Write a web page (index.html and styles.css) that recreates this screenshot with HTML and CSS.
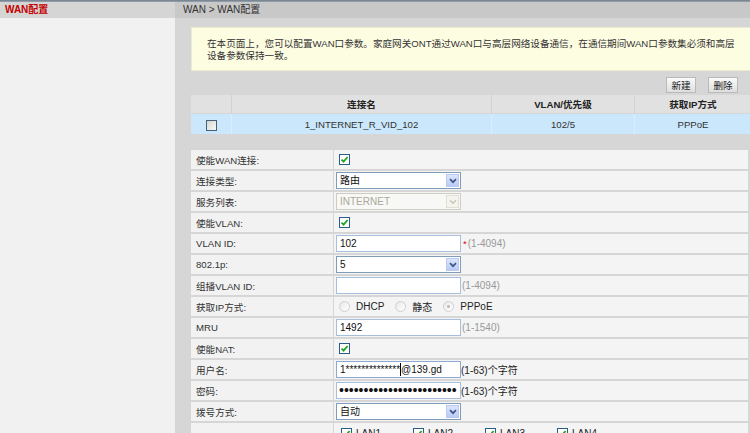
FILE: index.html
```html
<!DOCTYPE html>
<html lang="zh-CN">
<head>
<meta charset="utf-8">
<title>WAN配置</title>
<link rel="stylesheet" href="styles.css">
</head>
<body>
<div class="topline"></div>
<div class="frame">
  <aside class="sidebar">
    <div class="side-head">WAN配置</div>
    <div class="side-body"></div>
  </aside>
  <main class="main">
    <div class="crumb">WAN &gt; WAN配置</div>
    <div class="content">
      <div class="notice">在本页面上，您可以配置WAN口参数。家庭网关ONT通过WAN口与高层网络设备通信，在通信期间WAN口参数集必须和高层<br>设备参数保持一致。</div>
      <div class="toolbar">
        <button class="btn">新建</button>
        <button class="btn">删除</button>
      </div>
      <table class="list">
        <tr class="list-head">
          <th class="c-chk"></th>
          <th class="c-name">连接名</th>
          <th class="c-vlan">VLAN/优先级</th>
          <th class="c-ip">获取IP方式</th>
        </tr>
        <tr class="list-row">
          <td class="c-chk"><span class="cb cb-plain"></span></td>
          <td>1_INTERNET_R_VID_102</td>
          <td>102/5</td>
          <td>PPPoE</td>
        </tr>
      </table>

      <div class="form">
        <div class="lbl">使能WAN连接:</div>
        <div class="val"><span class="cb cb-on"><svg width="9" height="9" viewBox="0 0 9 9"><path d="M1.5 4.6 L3.6 6.7 L7.6 2" stroke="#22a322" stroke-width="1.8" fill="none"/></svg></span></div>

        <div class="lbl">连接类型:</div>
        <div class="val"><div class="select"><span class="sel-text">路由</span><span class="sel-btn"><svg width="8" height="6" viewBox="0 0 8 6"><path d="M1 1.2 L4 4.2 L7 1.2" stroke="#3f5685" stroke-width="1.7" fill="none"/></svg></span></div></div>

        <div class="lbl">服务列表:</div>
        <div class="val"><div class="select select-off"><span class="sel-text">INTERNET</span><span class="sel-btn"><svg width="8" height="6" viewBox="0 0 8 6"><path d="M1 1.2 L4 4.2 L7 1.2" stroke="#c9c7ba" stroke-width="1.5" fill="none"/></svg></span></div></div>

        <div class="lbl">使能VLAN:</div>
        <div class="val"><span class="cb cb-on"><svg width="9" height="9" viewBox="0 0 9 9"><path d="M1.5 4.6 L3.6 6.7 L7.6 2" stroke="#22a322" stroke-width="1.8" fill="none"/></svg></span></div>

        <div class="lbl">VLAN ID:</div>
        <div class="val"><div class="field">102</div><span class="req">*</span><span class="hint">(1-4094)</span></div>

        <div class="lbl">802.1p:</div>
        <div class="val"><div class="select"><span class="sel-text">5</span><span class="sel-btn"><svg width="8" height="6" viewBox="0 0 8 6"><path d="M1 1.2 L4 4.2 L7 1.2" stroke="#3f5685" stroke-width="1.7" fill="none"/></svg></span></div></div>

        <div class="lbl">组播VLAN ID:</div>
        <div class="val"><div class="field"></div><span class="hint">(1-4094)</span></div>

        <div class="lbl">获取IP方式:</div>
        <div class="val radios">
          <span class="radio"></span><span class="rtext">DHCP</span>
          <span class="radio"></span><span class="rtext">静态</span>
          <span class="radio radio-on"></span><span class="rtext">PPPoE</span>
        </div>

        <div class="lbl">MRU</div>
        <div class="val"><div class="field">1492</div><span class="hint">(1-1540)</span></div>

        <div class="lbl">使能NAT:</div>
        <div class="val"><span class="cb cb-on"><svg width="9" height="9" viewBox="0 0 9 9"><path d="M1.5 4.6 L3.6 6.7 L7.6 2" stroke="#22a322" stroke-width="1.8" fill="none"/></svg></span></div>

        <div class="lbl">用户名:</div>
        <div class="val"><div class="field field-focus">1**************<span class="caret"></span>@139.gd</div><span class="note">(1-63)个字符</span></div>

        <div class="lbl">密码:</div>
        <div class="val"><div class="field field-pass">••••••••••••••••••••••••</div><span class="note">(1-63)个字符</span></div>

        <div class="lbl">拨号方式:</div>
        <div class="val"><div class="select"><span class="sel-text">自动</span><span class="sel-btn"><svg width="8" height="6" viewBox="0 0 8 6"><path d="M1 1.2 L4 4.2 L7 1.2" stroke="#3f5685" stroke-width="1.7" fill="none"/></svg></span></div></div>

        <div class="lbl lbl-tall"></div>
        <div class="val lans">
          <span class="lan"><span class="cb cb-on"><svg width="9" height="9" viewBox="0 0 9 9"><path d="M1.5 4.6 L3.6 6.7 L7.6 2" stroke="#22a322" stroke-width="1.8" fill="none"/></svg></span>LAN1</span>
          <span class="lan"><span class="cb cb-on"><svg width="9" height="9" viewBox="0 0 9 9"><path d="M1.5 4.6 L3.6 6.7 L7.6 2" stroke="#22a322" stroke-width="1.8" fill="none"/></svg></span>LAN2</span>
          <span class="lan"><span class="cb cb-on"><svg width="9" height="9" viewBox="0 0 9 9"><path d="M1.5 4.6 L3.6 6.7 L7.6 2" stroke="#22a322" stroke-width="1.8" fill="none"/></svg></span>LAN3</span>
          <span class="lan"><span class="cb cb-on"><svg width="9" height="9" viewBox="0 0 9 9"><path d="M1.5 4.6 L3.6 6.7 L7.6 2" stroke="#22a322" stroke-width="1.8" fill="none"/></svg></span>LAN4</span>
        </div>
      </div>
    </div>
  </main>
</div>
</body>
</html>
```

FILE: styles.css
```css
html, body {
  margin: 0;
  padding: 0;
}
body {
  width: 750px;
  height: 433px;
  overflow: hidden;
  background: #d6d6d6;
  font-family: "Liberation Sans", "Noto Sans CJK SC", sans-serif;
  font-size: 9.6px;
  color: #333;
}
.topline {
  height: 2px;
  background: linear-gradient(#6f7d8b, #9aa6b1);
}
.frame {
  display: flex;
  height: 431px;
}
.sidebar {
  width: 175px;
  flex: none;
  display: flex;
  flex-direction: column;
  background: #f1f1f1;
}
.side-head {
  height: 16px;
  line-height: 16px;
  padding-left: 5px;
  background: #d5d5d5;
  color: #c40000;
  font-weight: bold;
  font-size: 10px;
}
.side-body {
  flex: 1;
}
.main {
  flex: 1;
  display: flex;
  flex-direction: column;
  background: #d6d6d6;
}
.crumb {
  height: 16px;
  line-height: 16px;
  padding-left: 8px;
  background: #c8c8c8;
  color: #333;
  font-size: 10px;
}
.content {
  padding: 9px 2px 0 16px;
}
.notice {
  height: 44px;
  box-sizing: border-box;
  padding: 10px 0 0 15px;
  line-height: 12px;
  background: #fdfde2;
  border: 1px solid #ecebcf;
  white-space: nowrap;
  overflow: hidden;
}
.toolbar {
  display: flex;
  justify-content: flex-end;
  gap: 12px;
  height: 16px;
  margin: 6px 0 2px;
  padding-right: 13px;
}
.btn {
  width: 30px;
  height: 16px;
  padding: 0;
  font: inherit;
  color: #222;
  border: 1px solid #b9b9b9;
  background: linear-gradient(#fafafa, #dedede);
}
.list {
  width: 557px;
  border-collapse: collapse;
  table-layout: fixed;
}
.list th, .list td {
  height: 18px;
  padding: 0;
  text-align: center;
  vertical-align: middle;
}
.list th {
  background: #e1e1e1;
  color: #222;
  font-weight: bold;
  border-left: 1px solid #d2d2d2;
}
.list td {
  background: #cbe7fb;
  border-left: 1px solid #dcecf8;
  border-top: 1px solid #d6d6d6;
}
.list .c-chk { width: 40px; border-left: none; }
.list .c-name { width: 259px; }
.list .c-vlan { width: 142px; }
.list .c-ip { width: 116px; }
.list td.c-chk {
  padding-top: 2px;
}

.cb {
  display: inline-flex;
  align-items: center;
  justify-content: center;
  width: 11px;
  height: 11px;
  box-sizing: border-box;
  border: 1px solid #2a5c8a;
  background: linear-gradient(135deg, #dcdcd6, #ffffff);
  vertical-align: middle;
}
.cb-plain {
  border-color: #46607c;
  background: linear-gradient(135deg, #d6d6d0, #f8f8f8);
}
.cb-on {
  background: #fff;
}

.form {
  margin-top: 16px;
  width: 557px;
  display: grid;
  grid-template-columns: 142px 1fr;
  grid-auto-rows: 19px;
  column-gap: 1px;
  row-gap: 2px;
  background: #d6d6d6;
}
.lbl {
  background: #f2f2f2;
  padding-left: 5px;
  display: flex;
  align-items: center;
  color: #333;
}
.val {
  background: #f4f4f4;
  padding-left: 2px;
  display: flex;
  align-items: center;
}
.val > .cb {
  margin-left: 3px;
}
.select {
  width: 125px;
  height: 17px;
  box-sizing: border-box;
  border: 1px solid #7f9db9;
  background: #fff;
  display: flex;
  align-items: stretch;
}
.sel-text {
  flex: 1;
  padding-left: 3px;
  line-height: 15px;
  color: #111;
  font-size: 10px;
}
.sel-btn {
  width: 13px;
  margin: 1px;
  box-sizing: border-box;
  border: 1px solid #b9c9ef;
  background: linear-gradient(#dbe5fd, #b9cbf6);
  display: flex;
  align-items: center;
  justify-content: center;
}
.select-off {
  border-color: #cfcdc2;
  background: #f8f8f6;
}
.select-off .sel-text {
  color: #aca899;
}
.select-off .sel-btn {
  border-color: #e2e0d6;
  background: #f4f3ee;
}
.field {
  width: 125px;
  height: 17px;
  box-sizing: border-box;
  border: 1px solid #a7bfdc;
  background: #fff;
  padding-left: 3px;
  line-height: 15px;
  color: #111;
  font-size: 10px;
  white-space: nowrap;
  overflow: hidden;
  position: relative;
}
.field-focus {
  border-color: #8eaad2;
}
.caret {
  display: inline-block;
  width: 1px;
  height: 13px;
  background: #000;
  vertical-align: -3px;
}
.field-pass {
  font-size: 14px;
  line-height: 14px;
  padding-left: 2px;
  letter-spacing: 0;
}
.req {
  color: #e00000;
  margin-left: 2px;
}
.hint {
  color: #999;
  margin-left: 1px;
  font-size: 10px;
}
.note {
  color: #222;
  font-size: 10px;
}
.radios {
  padding-left: 5px;
}
.radio {
  width: 9px;
  height: 9px;
  border-radius: 50%;
  border: 1px solid #cfcfcf;
  background: linear-gradient(135deg, #e8e8e8, #ffffff);
  position: relative;
}
.radio-on::after {
  content: "";
  position: absolute;
  left: 3px;
  top: 3px;
  width: 3px;
  height: 3px;
  border-radius: 50%;
  background: #b8b8b8;
}
.rtext {
  margin-left: 6px;
  margin-right: 11px;
  color: #222;
  font-size: 10px;
}
.lans {
  align-items: flex-start;
  padding-top: 5px;
}
.lan {
  width: 72px;
  display: inline-flex;
  align-items: center;
  gap: 4px;
  color: #222;
  font-size: 10px;
}
.lan .cb {
  margin-left: 5px;
}
```
